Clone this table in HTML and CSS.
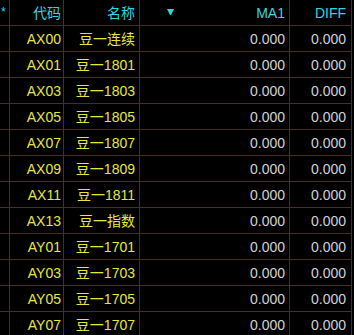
FILE: index.html
```html
<!DOCTYPE html>
<html>
<head>
<meta charset="utf-8">
<link rel="stylesheet" href="styles.css">
</head>
<body>
<div class="grid">
  <div class="cell hd star">*</div>
  <div class="cell hd r1">代码</div>
  <div class="cell hd r2">名称</div>
  <div class="cell hd ma"><svg class="tri" width="7" height="7" viewBox="0 0 7 7"><polygon points="0,0 7,0 4,6 3,6" fill="#2fd8e0"/></svg><span>MA1</span></div>
  <div class="cell hd r4">DIFF</div>

  <div class="cell"></div><div class="cell code r1">AX00</div><div class="cell name r2">豆一连续</div><div class="cell num r3">0.000</div><div class="cell num r4">0.000</div>
  <div class="cell"></div><div class="cell code r1">AX01</div><div class="cell name r2">豆一1801</div><div class="cell num r3">0.000</div><div class="cell num r4">0.000</div>
  <div class="cell"></div><div class="cell code r1">AX03</div><div class="cell name r2">豆一1803</div><div class="cell num r3">0.000</div><div class="cell num r4">0.000</div>
  <div class="cell"></div><div class="cell code r1">AX05</div><div class="cell name r2">豆一1805</div><div class="cell num r3">0.000</div><div class="cell num r4">0.000</div>
  <div class="cell"></div><div class="cell code r1">AX07</div><div class="cell name r2">豆一1807</div><div class="cell num r3">0.000</div><div class="cell num r4">0.000</div>
  <div class="cell"></div><div class="cell code r1">AX09</div><div class="cell name r2">豆一1809</div><div class="cell num r3">0.000</div><div class="cell num r4">0.000</div>
  <div class="cell"></div><div class="cell code r1">AX11</div><div class="cell name r2">豆一1811</div><div class="cell num r3">0.000</div><div class="cell num r4">0.000</div>
  <div class="cell"></div><div class="cell code r1">AX13</div><div class="cell name r2">豆一指数</div><div class="cell num r3">0.000</div><div class="cell num r4">0.000</div>
  <div class="cell"></div><div class="cell code r1">AY01</div><div class="cell name r2">豆一1701</div><div class="cell num r3">0.000</div><div class="cell num r4">0.000</div>
  <div class="cell"></div><div class="cell code r1">AY03</div><div class="cell name r2">豆一1703</div><div class="cell num r3">0.000</div><div class="cell num r4">0.000</div>
  <div class="cell"></div><div class="cell code r1">AY05</div><div class="cell name r2">豆一1705</div><div class="cell num r3">0.000</div><div class="cell num r4">0.000</div>
  <div class="cell"></div><div class="cell code r1">AY07</div><div class="cell name r2">豆一1707</div><div class="cell num r3">0.000</div><div class="cell num r4">0.000</div>
</div>
</body>
</html>
```
FILE: styles.css
```css
html, body {
  margin: 0;
  padding: 0;
  background: #000;
  overflow: hidden;
}
body {
  width: 354px;
  height: 335px;
  font-family: "Liberation Sans", "Noto Sans CJK SC", sans-serif;
  font-size: 14px;
}
.grid {
  display: grid;
  grid-template-columns: 10px 54px 76px 150px 62px;
  grid-auto-rows: 26px;
}
.cell {
  box-sizing: border-box;
  border-right: 1px solid #4a2e26;
  border-bottom: 1px solid #4a2e26;
  display: flex;
  align-items: center;
  white-space: nowrap;
  overflow: hidden;
  line-height: 16px;
}
.hd {
  color: #2fd8e0;
}
.star {
  align-items: flex-start;
  padding: 4px 0 0 1px;
  font-size: 12px;
}
.r1 { justify-content: flex-end; padding-right: 2px; }
.r2 { justify-content: flex-end; padding-right: 4px; }
.r3 { justify-content: flex-end; padding-right: 4px; }
.r4 { justify-content: flex-end; padding-right: 5px; }
.ma {
  justify-content: space-between;
  padding-left: 27px;
  padding-right: 4px;
}
.tri {
  display: block;
  margin-top: -1px;
}
.code { color: #e6e63c; }
.name { color: #e6e63c; }
.num { color: #d2d2d2; }
```
